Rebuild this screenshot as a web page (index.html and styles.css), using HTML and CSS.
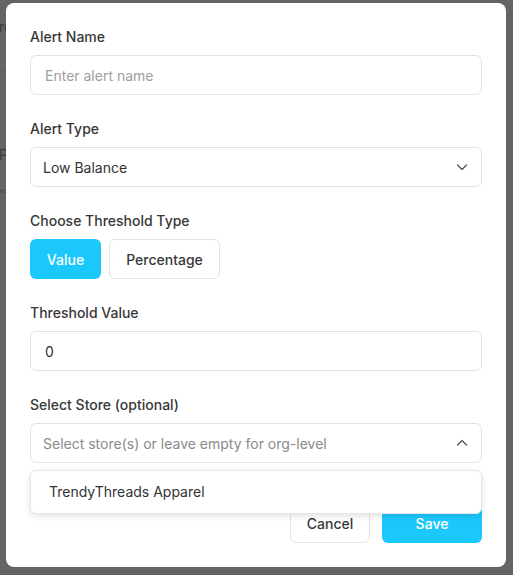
FILE: index.html
```html
<!DOCTYPE html>
<html lang="en">
<head>
    <meta charset="UTF-8">
    <meta name="viewport" content="width=device-width, initial-scale=1.0">
    <title>Create Alert</title>
    <link rel="stylesheet" href="styles.css">
</head>
<body>
    <div class="page">
        <div class="page-row page-title">ro</div>
        <div class="page-row"></div>
        <div class="page-row page-cell">P</div>
        <div class="page-row page-band"></div>
    </div>

    <div class="overlay">
        <div class="modal">
            <div class="field">
                <label class="label">Alert Name</label>
                <input class="input" type="text" placeholder="Enter alert name">
            </div>

            <div class="field">
                <label class="label">Alert Type</label>
                <div class="select">
                    <span>Low Balance</span>
                    <svg class="chevron" width="12" height="12" viewBox="0 0 12 12" fill="none">
                        <path d="M1.5 4L6 8.5L10.5 4" stroke="#555" stroke-width="1.3" stroke-linecap="round" stroke-linejoin="round"/>
                    </svg>
                </div>
            </div>

            <div class="field">
                <label class="label">Choose Threshold Type</label>
                <div class="toggle">
                    <button class="btn btn-primary btn-value">Value</button>
                    <button class="btn btn-outline">Percentage</button>
                </div>
            </div>

            <div class="field">
                <label class="label">Threshold Value</label>
                <input class="input" type="text" value="0">
            </div>

            <div class="field store-field">
                <label class="label">Select Store (optional)</label>
                <div class="select">
                    <span class="placeholder">Select store(s) or leave empty for org-level</span>
                    <svg class="chevron" width="12" height="12" viewBox="0 0 12 12" fill="none">
                        <path d="M1.5 8L6 3.5L10.5 8" stroke="#555" stroke-width="1.3" stroke-linecap="round" stroke-linejoin="round"/>
                    </svg>
                </div>
                <div class="dropdown">
                    <div class="dropdown-item">TrendyThreads Apparel</div>
                </div>
            </div>

            <div class="footer">
                <button class="btn btn-outline btn-cancel">Cancel</button>
                <button class="btn btn-primary btn-save">Save</button>
            </div>
        </div>
    </div>
</body>
</html>
```

FILE: styles.css
```css
body {
    font-family: Inter, "Noto Sans", sans-serif;
    background-color: #646464;
    color: #333;
    margin: 0;
    height: 575px;
    overflow: hidden;
}

.page {
    width: 6px;
    overflow: hidden;
}

.page-row {
    height: 44px;
    border-bottom: 1px solid #6c6c6c;
    color: #3a3a3a;
    font-size: 14px;
    line-height: 54px;
    white-space: nowrap;
    width: 513px;
}

.page-title {
    margin-left: -1px;
}

.page-row:nth-child(2) {
    height: 20px;
}

.page-cell {
    height: 122px;
    line-height: 178px;
    margin-left: -1px;
}

.page-band {
    height: 4px;
    background-color: #5a5a5a;
    border-bottom: none;
}

.overlay {
    position: fixed;
    top: 0;
    left: 0;
    width: 100%;
    height: 100%;
    display: flex;
    align-items: flex-start;
    padding: 3px 0 0 6px;
    box-sizing: border-box;
}

.modal {
    width: 500px;
    box-sizing: border-box;
    background-color: #fff;
    border-radius: 8px;
    padding: 24px;
}

.field {
    margin-bottom: 24px;
}

.label {
    display: block;
    font-size: 14px;
    font-weight: 500;
    line-height: 20px;
    margin-bottom: 8px;
    color: #383838;
}

.input,
.select {
    width: 100%;
    height: 40px;
    box-sizing: border-box;
    border: 1px solid #e2e2e2;
    border-radius: 6px;
    font-family: inherit;
    font-size: 14px;
    color: #333;
    background-color: #fff;
}

.input {
    padding: 0 14px;
    outline: none;
}

.input::placeholder {
    color: #9e9e9e;
}

.select {
    display: flex;
    align-items: center;
    justify-content: space-between;
    padding: 0 12px;
}

.placeholder {
    color: #8a8a8a;
}

.chevron {
    margin-right: 1px;
}

.toggle {
    display: flex;
    gap: 8px;
}

.btn {
    height: 40px;
    border-radius: 6px;
    font-family: inherit;
    font-size: 14px;
    font-weight: 500;
    cursor: pointer;
    box-sizing: border-box;
}

.btn-primary {
    background-color: #1bc8fc;
    color: #fff;
    border: none;
}

.btn-outline {
    background-color: #fff;
    color: #383838;
    border: 1px solid #e2e2e2;
}

.btn-value {
    width: 71px;
}

.toggle .btn-outline {
    width: 111px;
}

.store-field {
    position: relative;
    margin-bottom: 40px;
}

.dropdown {
    position: absolute;
    top: 75px;
    left: 0;
    right: 0;
    background-color: #fff;
    border: 1px solid #e6e6e6;
    border-radius: 6px;
    box-shadow: 0 2px 6px rgba(0, 0, 0, 0.12);
    z-index: 10;
}

.dropdown-item {
    height: 42px;
    line-height: 42px;
    padding-left: 18px;
    font-size: 14px;
    color: #333;
}

.footer {
    display: flex;
    justify-content: flex-end;
    gap: 12px;
}

.btn-cancel {
    width: 80px;
}

.btn-save {
    width: 100px;
}
```
